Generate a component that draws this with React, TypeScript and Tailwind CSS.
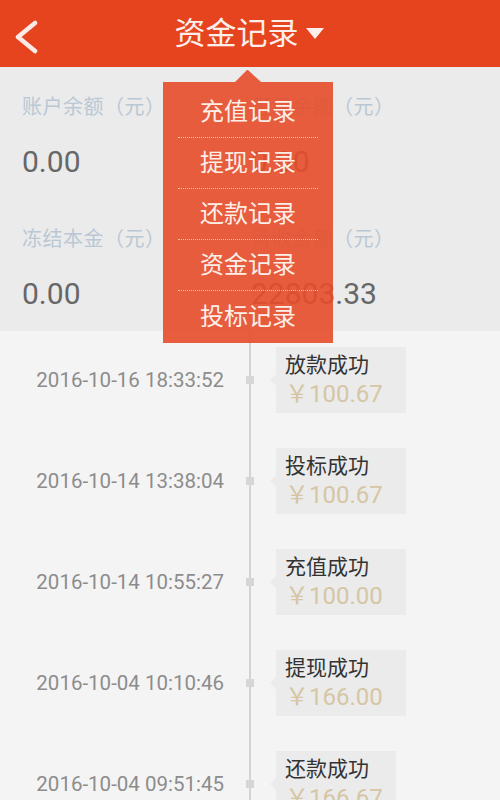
import React from "react";

const font = { fontFamily: 'Roboto, "Noto Sans CJK SC", sans-serif' };

const rows = [
  { date: "2016-10-16 18:33:52", title: "放款成功", amount: "￥100.67", w: "w-[130px]" },
  { date: "2016-10-14 13:38:04", title: "投标成功", amount: "￥100.67", w: "w-[130px]" },
  { date: "2016-10-14 10:55:27", title: "充值成功", amount: "￥100.00", w: "w-[130px]" },
  { date: "2016-10-04 10:10:46", title: "提现成功", amount: "￥166.00", w: "w-[130px]" },
  { date: "2016-10-04 09:51:45", title: "还款成功", amount: "￥166.67", w: "w-[120px]" },
];

const menu = ["充值记录", "提现记录", "还款记录", "资金记录", "投标记录"];

export default function App() {
  return (
    <div
      className="relative w-[500px] h-[800px] overflow-hidden bg-[#f4f4f4]"
      style={{ fontFamily: 'Roboto, "Noto Sans CJK SC", sans-serif' }}
    >
      {/* Header */}
      <div className="relative h-[67px] bg-[#e6431f] flex items-center justify-center">
        <svg
          className="absolute left-[13px] top-[20px]"
          width="28"
          height="34"
          viewBox="0 0 28 34"
          fill="none"
        >
          <path
            d="M22 3 L5 17 L22 31"
            stroke="#fbeae5"
            strokeWidth="4.5"
            strokeLinecap="round"
            strokeLinejoin="round"
          />
        </svg>
        <div className="flex items-center gap-[7px] ml-[-2px]">
          <span className="text-[31px] leading-none text-[#fcefeb]">资金记录</span>
          <svg width="18" height="12" viewBox="0 0 18 12">
            <path d="M0 0 L18 0 L9 11 Z" fill="#fcefeb" />
          </svg>
        </div>
      </div>

      {/* Summary */}
      <div className="h-[264px] bg-[#ebebeb] grid grid-cols-[229px_1fr] pl-[22px] pt-[26px]">
        <div className="flex flex-col">
          <span className="text-[20px] tracking-[0.5px] leading-[28px] text-[#bac8d5]">账户余额（元）</span>
          <span className="mt-[24px] text-[30px] leading-[34px] text-[#676767]">0.00</span>
          <span className="mt-[46px] text-[20px] tracking-[0.5px] leading-[28px] text-[#bac8d5]">冻结本金（元）</span>
          <span className="mt-[24px] text-[30px] leading-[34px] text-[#676767]">0.00</span>
        </div>
        <div className="flex flex-col">
          <span className="text-[20px] tracking-[0.5px] leading-[28px] text-[#bac8d5]">可用余额（元）</span>
          <span className="mt-[24px] text-[30px] leading-[34px] text-[#676767]">0.00</span>
          <span className="mt-[46px] text-[20px] tracking-[0.5px] leading-[28px] text-[#bac8d5]">待收金额（元）</span>
          <span className="mt-[24px] text-[30px] leading-[34px] text-[#676767]">22803.33</span>
        </div>
      </div>

      {/* Timeline */}
      <div className="relative pt-[16px] flex flex-col gap-[35px]">
        <div className="absolute left-[249px] top-0 bottom-0 w-[2px] bg-[#d3d3d3]" />
        {rows.map((r) => (
          <div key={r.date} className="relative flex items-center h-[66px]">
            <div className="w-[246px] pr-[22px] text-right text-[20.5px] text-[#8c8c8c] leading-none">
              {r.date}
            </div>
            <div className="w-[8px] h-[8px] bg-[#d6d6d6] relative z-10" />
            <div className="ml-[22px] relative">
              <div className="absolute left-[-6px] top-[27px] w-0 h-0 border-y-[6px] border-y-transparent border-r-[6px] border-r-[#ebebeb]" />
              <div className={`${r.w} h-[66px] bg-[#ebebeb] pl-[9px] pt-[5px] flex flex-col`}>
                <span className="text-[21px] leading-[27px] text-[#333333]">{r.title}</span>
                <span className="text-[24px] leading-[30px] text-[#d6c6a4]">{r.amount}</span>
              </div>
            </div>
          </div>
        ))}
      </div>

      {/* Dropdown */}
      <div className="absolute left-[163px] top-[70px] w-[170px]" style={font}>
        <svg className="block ml-[70px]" width="30" height="12" viewBox="0 0 30 12">
          <path d="M2 12 L14 0 L15 0 L28 12 Z" fill="rgba(229,76,42,0.9)" />
        </svg>
        <div className="bg-[rgba(229,76,42,0.9)] pt-[5px] pb-[1px] px-[15px] flex flex-col">
          {menu.map((m, i) => (
            <div
              key={m}
              className={`h-[51px] flex items-center justify-center text-[24px] text-[#fdeee8] ${
                i < menu.length - 1 ? "border-b border-dotted border-[#f7c3b4]" : ""
              }`}
            >
              {m}
            </div>
          ))}
        </div>
      </div>
    </div>
  );
}
